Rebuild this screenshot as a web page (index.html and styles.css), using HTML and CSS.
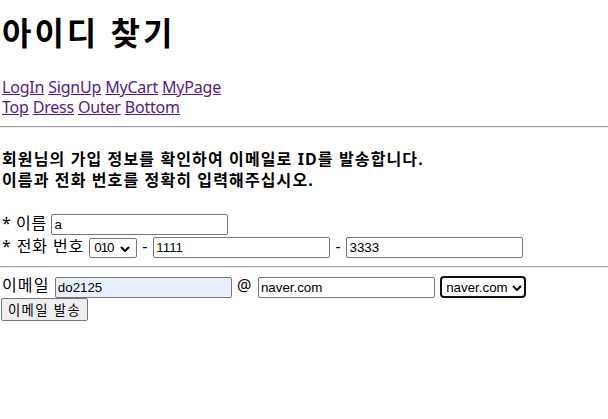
FILE: index.html
```html
<!DOCTYPE html>
<html lang="ko">
<head>
<meta charset="utf-8">
<title>아이디 찾기</title>
<link rel="stylesheet" href="styles.css">
</head>
<body>
<h1 class="title">아이디 찾기</h1>
<nav class="menu">
  <div class="menu-row"><a href="#">LogIn</a> <a href="#">SignUp</a> <a href="#">MyCart</a> <a href="#">MyPage</a></div>
  <div class="menu-row"><a href="#">Top</a> <a href="#">Dress</a> <a href="#">Outer</a> <a href="#">Bottom</a></div>
</nav>
<hr class="rule">
<p class="notice">회원님의 가입 정보를 확인하여 이메일로 ID를 발송합니다.<br>이름과 전화 번호를 정확히 입력해주십시오.</p>
<form class="form">
  <div class="row row-name">* 이름 <input class="field" type="text" value="a"></div>
  <div class="row row-phone">* 전화 번호 <select class="sel sel-phone"><option>010</option></select> - <input class="field" type="text" value="1111"> - <input class="field" type="text" value="3333"></div>
  <hr class="rule rule-form">
  <div class="row">이메일 <input class="field field-auto" type="text" value="do2125"> @ <input class="field" type="text" value="naver.com"> <select class="sel sel-mail"><option>naver.com</option></select></div>
  <div class="row-btn"><button type="button" class="btn">이메일 발송</button></div>
</form>
</body>
</html>
```
FILE: styles.css
```css
html, body {
  margin: 0;
  padding: 0;
  background: #fff;
}
body {
  font-family: "Noto Sans", "Noto Sans CJK KR", sans-serif;
  font-size: 16px;
  color: #000;
  letter-spacing: 0.07em;
}
.title {
  font-size: 32px;
  font-weight: 700;
  line-height: 40px;
  letter-spacing: 0.093em;
  margin: 13px 2px 24px;
}
.menu {
  padding-left: 2px;
  letter-spacing: -0.2px;
}
.menu-row {
  line-height: 20px;
}
.menu a {
  color: #551a8b;
}
.rule {
  margin: 9px 0 8px;
  border: 0;
  border-top: 1px solid #9a9a9a;
  border-bottom: 1px solid #eeeeee;
  height: 0;
}
.notice {
  font-weight: 700;
  line-height: 21px;
  margin: 21px 2px 21px;
}
.form {
  margin: 0;
}
.row {
  line-height: 23px;
  padding-left: 2px;
}
.row-name {
  letter-spacing: 0.035em;
}
.row-phone {
  letter-spacing: 0.055em;
}
.field {
  box-sizing: border-box;
  width: 177px;
  height: 21px;
  font-family: "Liberation Sans", Arial, sans-serif;
  font-size: 13.33px;
  letter-spacing: 0;
  color: #000;
  border: 1px solid #767676;
  border-radius: 2px;
  padding: 1px 2px;
  vertical-align: middle;
  margin: 0;
}
.field-auto {
  background: #e8f0fe;
}
.sel {
  -webkit-appearance: none;
  appearance: none;
  box-sizing: border-box;
  height: 20px;
  font-family: "Liberation Sans", Arial, sans-serif;
  font-size: 13.33px;
  letter-spacing: 0;
  color: #000;
  border: 1px solid #767676;
  border-radius: 2px;
  background-color: #fff;
  background-image: url("data:image/svg+xml,%3Csvg xmlns='http://www.w3.org/2000/svg' width='10' height='6' viewBox='0 0 10 6'%3E%3Cpath d='M1 1L5 5L9 1' fill='none' stroke='%23000' stroke-width='2'/%3E%3C/svg%3E");
  background-repeat: no-repeat;
  vertical-align: middle;
  margin: 0;
  padding: 0 0 0 4px;
}
.sel-phone {
  width: 48px;
  letter-spacing: -1px;
  background-position: 30px 7px;
}
.sel-mail {
  width: 86px;
  height: 22px;
  border: 2px solid #101010;
  border-radius: 4px;
  padding-left: 4px;
  background-position: 70px 7px;
}
.rule-form {
  margin: 8px 0 6px;
}
.row-btn {
  line-height: 23px;
}
.btn {
  box-sizing: border-box;
  height: 23px;
  width: 87px;
  font-family: "Noto Sans CJK KR", sans-serif;
  font-size: 13.33px;
  letter-spacing: 0.1em;
  color: #000;
  border: 1px solid #767676;
  border-radius: 2px;
  background: #efefef;
  padding: 0 4px;
  margin: 0 0 0 1px;
  vertical-align: top;
}
```
